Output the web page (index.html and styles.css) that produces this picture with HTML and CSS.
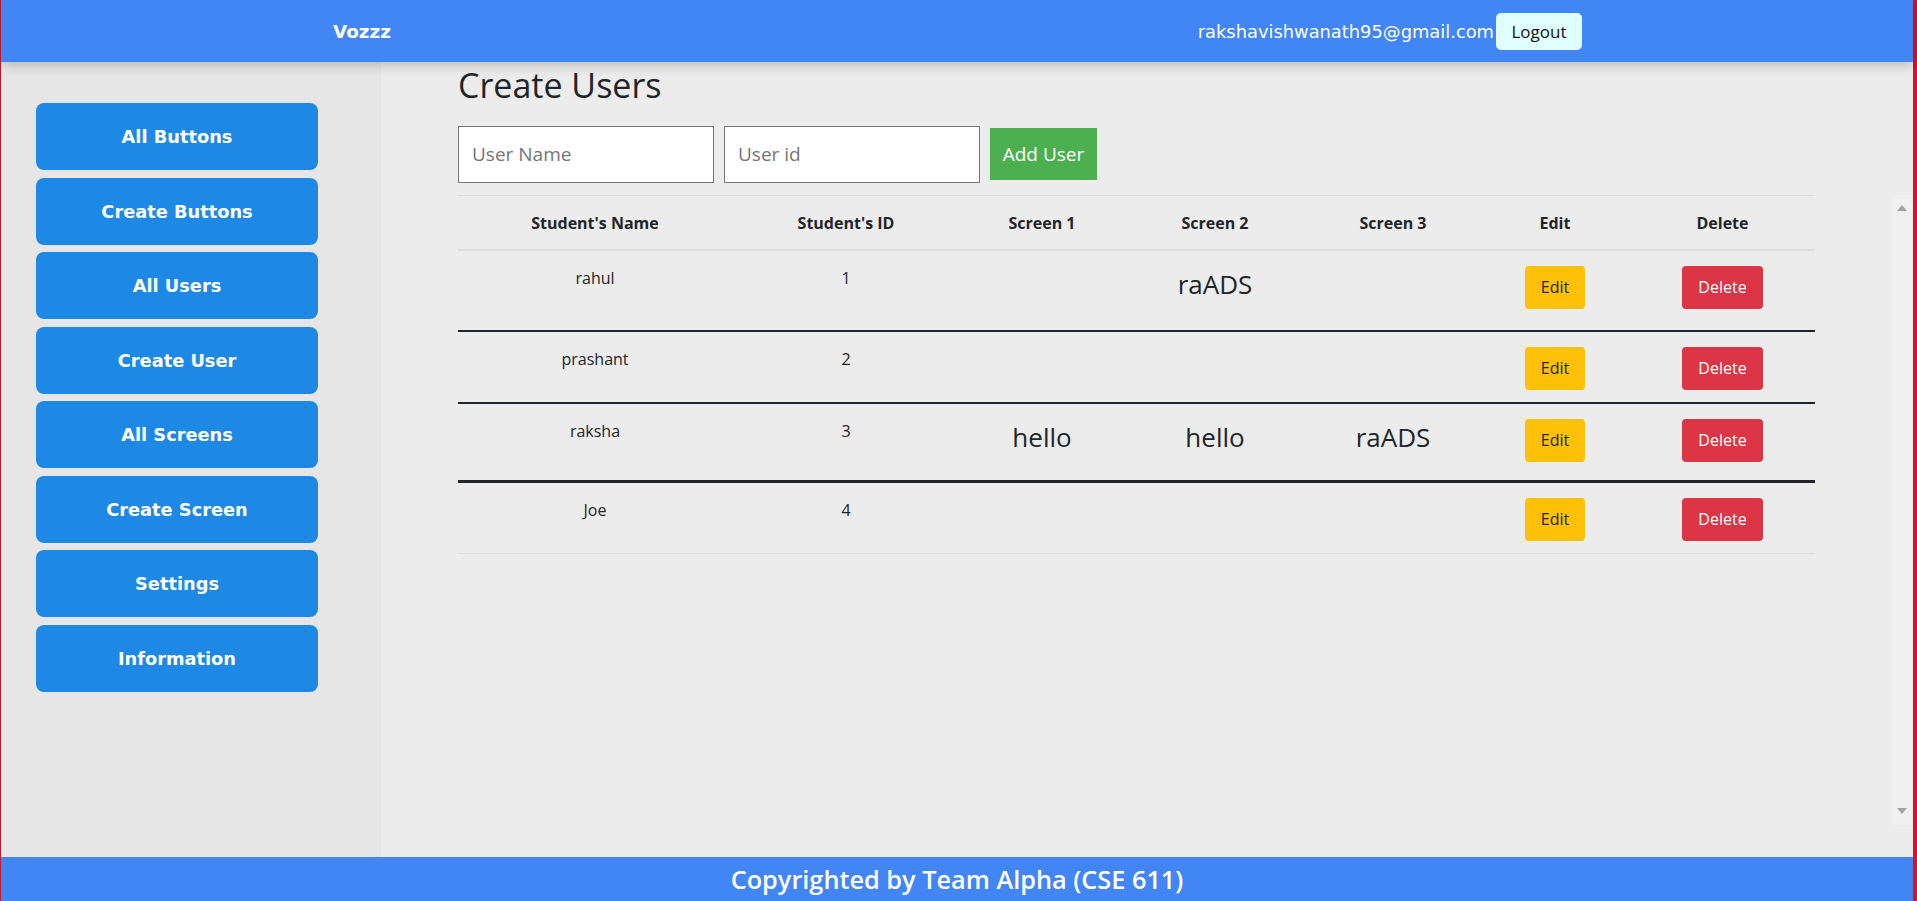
FILE: index.html
```html
<!DOCTYPE html>
<html lang="en">
<head>
<meta charset="utf-8">
<title>Vozzz</title>
<link rel="stylesheet" href="styles.css">
</head>
<body>
<div class="app">
  <header class="navbar">
    <span class="brand">Vozzz</span>
    <div class="account">
      <span class="email">rakshavishwanath95@gmail.com</span>
      <button class="logout">Logout</button>
    </div>
  </header>
  <div class="body">
    <aside class="sidebar">
      <a class="side-btn">All Buttons</a>
      <a class="side-btn">Create Buttons</a>
      <a class="side-btn">All Users</a>
      <a class="side-btn">Create User</a>
      <a class="side-btn">All Screens</a>
      <a class="side-btn">Create Screen</a>
      <a class="side-btn">Settings</a>
      <a class="side-btn">Information</a>
    </aside>
    <main class="main">
      <h2 class="title">Create Users</h2>
      <form class="add-form">
        <input class="field" type="text" placeholder="User Name">
        <input class="field" type="text" placeholder="User id">
        <button type="button" class="add-btn">Add User</button>
      </form>
      <div class="scroll-area">
        <div class="scroll-content">
          <table class="users">
            <colgroup>
              <col class="c-name"><col class="c-id"><col class="c-s1"><col class="c-s2"><col class="c-s3"><col class="c-edit"><col class="c-del">
            </colgroup>
            <thead>
              <tr><th>Student's Name</th><th>Student's ID</th><th>Screen 1</th><th>Screen 2</th><th>Screen 3</th><th>Edit</th><th>Delete</th></tr>
            </thead>
            <tbody>
              <tr class="b2">
                <td>rahul</td><td>1</td><td></td><td><p class="screen">raADS</p></td><td></td>
                <td><button class="btn edit">Edit</button></td><td><button class="btn del">Delete</button></td>
              </tr>
              <tr class="b2">
                <td>prashant</td><td>2</td><td></td><td></td><td></td>
                <td><button class="btn edit">Edit</button></td><td><button class="btn del">Delete</button></td>
              </tr>
              <tr class="b3">
                <td>raksha</td><td>3</td><td><p class="screen">hello</p></td><td><p class="screen">hello</p></td><td><p class="screen">raADS</p></td>
                <td><button class="btn edit">Edit</button></td><td><button class="btn del">Delete</button></td>
              </tr>
              <tr class="last">
                <td>Joe</td><td>4</td><td></td><td></td><td></td>
                <td><button class="btn edit">Edit</button></td><td><button class="btn del">Delete</button></td>
              </tr>
            </tbody>
          </table>
        </div>
        <div class="scrollbar">
          <svg class="arrow" width="10" height="6" viewBox="0 0 10 6"><polygon points="0,6 5,0 10,6" fill="#a3a3a3"/></svg>
          <svg class="arrow" width="10" height="6" viewBox="0 0 10 6"><polygon points="0,0 10,0 5,6" fill="#a3a3a3"/></svg>
        </div>
      </div>
    </main>
  </div>
  <footer class="footer">Copyrighted by Team Alpha (CSE 611)</footer>
</div>
</body>
</html>
```
FILE: styles.css
```css
* { box-sizing: border-box; }
html, body { margin: 0; padding: 0; }
body {
  width: 1917px;
  height: 901px;
  overflow: hidden;
  font-family: "Open Sans", "Noto Sans", sans-serif;
  color: #212529;
  background: #ececec;
}
.app {
  height: 901px;
  display: flex;
  flex-direction: column;
  border-left: 1px solid #c81a2c;
  border-right: 4px solid #d0142c;
}
.navbar {
  height: 62px;
  flex: none;
  background: #4285f4;
  display: flex;
  align-items: center;
  justify-content: space-between;
  padding: 0 331px 0 332px;
  position: relative;
  z-index: 2;
  box-shadow: 0 3px 12px rgba(0, 0, 0, 0.22);
}
.brand {
  font-family: "DejaVu Sans", Verdana, sans-serif;
  font-weight: bold;
  font-size: 18.4px;
  color: #fff;
}
.account {
  display: flex;
  align-items: center;
  gap: 2px;
}
.email {
  font-family: "DejaVu Sans", Verdana, sans-serif;
  font-size: 17.85px;
  color: #fff;
}
.logout {
  height: 37px;
  width: 86px;
  border: none;
  border-radius: 5px;
  background: #e0ffff;
  color: #111;
  font-family: "Open Sans", sans-serif;
  font-size: 17px;
  padding: 0;
}
.body {
  flex: 1;
  display: flex;
  min-height: 0;
}
.sidebar {
  width: 380px;
  flex: none;
  background: #e6e6e6;
  padding: 41px 0 0 35px;
  display: flex;
  flex-direction: column;
  gap: 7.5px;
}
.side-btn {
  width: 282px;
  height: 67px;
  border-radius: 8px;
  background: #1e88e5;
  color: #fff;
  font-family: "DejaVu Sans", Verdana, sans-serif;
  font-weight: bold;
  font-size: 17.8px;
  display: flex;
  align-items: center;
  justify-content: center;
}
.main {
  flex: 1;
  background: #ececec;
  padding: 0 1px 0 77px;
  display: flex;
  flex-direction: column;
}
.title {
  font-size: 34px;
  font-weight: 400;
  line-height: 1.2;
  margin: 3px 0 20px;
  color: #212529;
}
.add-form {
  display: flex;
  align-items: center;
  gap: 10px;
  height: 57px;
  margin: 0 0 12px;
}
.field {
  width: 256px;
  height: 57px;
  border: 1px solid #767676;
  background: #fff;
  padding: 0 13px;
  font-family: "Open Sans", sans-serif;
  font-size: 19px;
  color: #212529;
}
.field::placeholder { color: #757575; }
.add-btn {
  width: 107px;
  height: 52px;
  border: none;
  background: #4caf50;
  color: #fff;
  font-family: "Open Sans", sans-serif;
  font-size: 19px;
  padding: 0;
}
.scroll-area {
  height: 630px;
  display: flex;
  justify-content: space-between;
}
.scroll-content { width: 1357px; }
.scrollbar {
  width: 20px;
  background: #f0f0f0;
  display: flex;
  flex-direction: column;
  justify-content: space-between;
  align-items: center;
  padding: 10px 0 11px;
}
.users {
  width: 1357px;
  table-layout: fixed;
  border-collapse: collapse;
  text-align: center;
  font-size: 16px;
  line-height: 24px;
}
.c-name { width: 274px; }
.c-id { width: 228px; }
.c-s1 { width: 164px; }
.c-s2 { width: 182px; }
.c-s3 { width: 174px; }
.c-edit { width: 150px; }
.c-del { width: 185px; }
.users thead tr { border-top: 1px solid #dcdcdc; border-bottom: 2px solid #dcdcdc; }
.users th {
  font-weight: 700;
  padding: 15px 8px 14px;
}
.users td {
  vertical-align: top;
  padding: 15px 8px 12px;
}
.users tr.b2 { border-bottom: 2px solid #212529; }
.users tr.b3 { border-bottom: 3px solid #212529; }
.users tr.b3 td { padding-bottom: 9px; }
.users tr.last { border-bottom: 1px solid #dcdcdc; }
.screen {
  margin: 0 0 16px;
  font-size: 26px;
  line-height: 36px;
}
.btn {
  height: 43px;
  border: none;
  border-radius: 4px;
  font-family: "Open Sans", sans-serif;
  font-size: 16px;
  padding: 0 16px;
}
.edit { background: #ffc107; color: #212529; }
.del { background: #dc3545; color: #fff; }
.footer {
  height: 44px;
  flex: none;
  background: #4285f4;
  color: #fff;
  font-family: "Open Sans", sans-serif;
  font-weight: 600;
  font-size: 25.3px;
  display: flex;
  align-items: center;
  justify-content: center;
}
```
